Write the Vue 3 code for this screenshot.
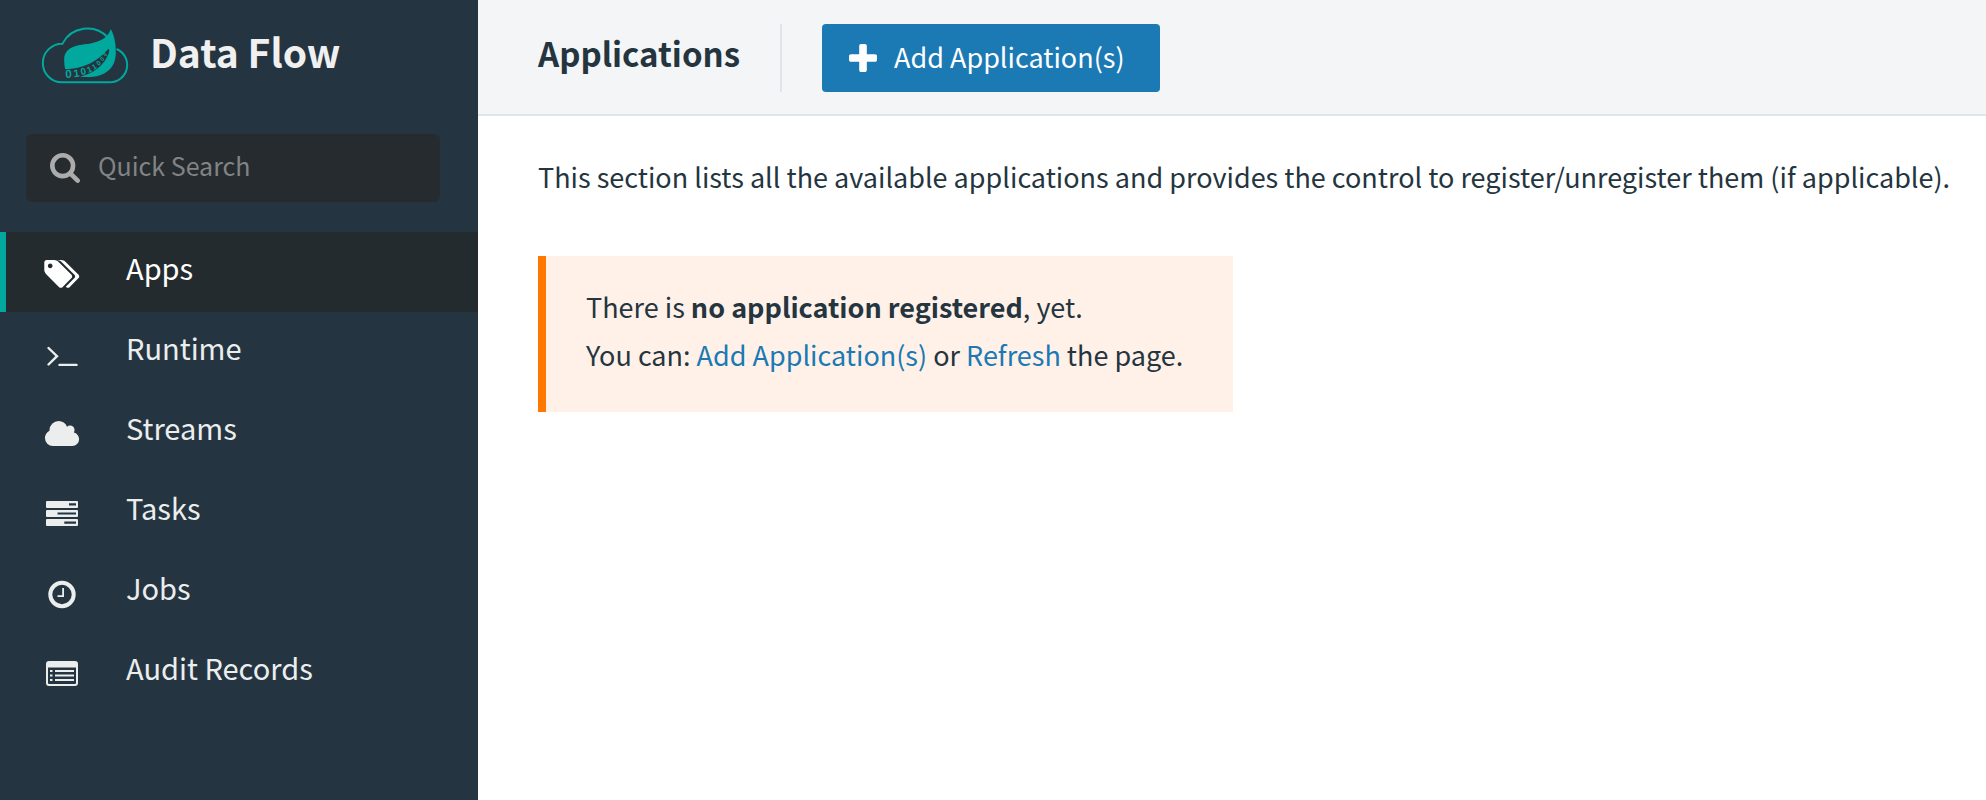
<script setup>
import { ref } from 'vue'

const query = ref('')
const active = ref('Apps')

const items = [
  { label: 'Apps', icon: 'tags' },
  { label: 'Runtime', icon: 'terminal' },
  { label: 'Streams', icon: 'cloud' },
  { label: 'Tasks', icon: 'server' },
  { label: 'Jobs', icon: 'clock' },
  { label: 'Audit Records', icon: 'list' },
]

const digits = [
  { c: '0', x: 97, y: 161, size: 35, turn: -3 },
  { c: '1', x: 121, y: 159, size: 32, turn: -8 },
  { c: '0', x: 141, y: 154, size: 29, turn: -14 },
  { c: '1', x: 159, y: 148, size: 25, turn: -22 },
  { c: '1', x: 174, y: 140, size: 22, turn: -30 },
  { c: '0', x: 187, y: 129, size: 20, turn: -38 },
  { c: '0', x: 198, y: 117, size: 17, turn: -46 },
  { c: '0', x: 207, y: 104, size: 15, turn: -54 },
]
</script>

<template>
  <div class="shell">
    <aside class="sidebar">
      <a class="brand" href="#">
        <svg class="logo" viewBox="15 15 266 180" aria-hidden="true">
          <path
            class="logo-cloud"
            d="M215 52A84 84 0 0 0 79 71A58 58 0 0 0 77 187H222A52 52 0 0 0 241 87"
          />
          <path
            class="logo-leaf"
            d="M224 27C214 55 192 65 160 71C118 75 84 82 84 120Q84 135 87 148C140 146 185 125 217 86Q221 90 217 101C205 135 170 161 132 170C200 177 240 150 239 95Q239 55 224 27Z"
          />
          <text
            v-for="(d, i) in digits"
            :key="i"
            class="logo-digit"
            :font-size="d.size"
            :transform="`translate(${d.x} ${d.y}) rotate(${d.turn})`"
            text-anchor="middle"
            dy="0.36em"
          >{{ d.c }}</text>
        </svg>
        <span class="brand-name">Data Flow</span>
      </a>

      <label class="search">
        <svg class="search-icon" viewBox="64 128 1664 1664" aria-hidden="true">
          <path d="M1216 832q0-185-131.500-316.500t-316.500-131.500-316.500 131.500-131.500 316.500 131.500 316.500 316.500 131.500 316.500-131.500 131.500-316.500zm512 832q0 52-38 90t-90 38q-54 0-90-38l-343-342q-179 124-399 124-143 0-273.500-55.500t-225-150-150-225-55.500-273.500 55.500-273.500 150-225 225-150 273.500-55.500 273.500 55.500 225 150 150 225 55.500 273.500q0 220-124 399l343 343q37 37 37 90z" />
        </svg>
        <input v-model="query" type="text" placeholder="Quick Search" aria-label="Quick Search" />
      </label>

      <nav>
        <a
          v-for="item in items"
          :key="item.label"
          href="#"
          class="nav-item"
          :class="{ active: active === item.label }"
          @click.prevent="active = item.label"
        >
          <svg class="nav-icon" viewBox="0 0 36 36" aria-hidden="true">
            <path
              v-if="item.icon === 'tags'"
              transform="translate(0.3 1.6) scale(0.0184)"
              d="M448 448q0-53-37.500-90.500t-90.500-37.500-90.500 37.500-37.500 90.500 37.500 90.500 90.500 37.500 90.500-37.500 37.500-90.500zm1067 576q0 53-37 90l-491 492q-39 37-91 37-53 0-90-37l-715-716q-38-37-64.500-101t-26.500-117v-416q0-52 38-90t90-38h416q53 0 117 26.500t102 64.500l715 714q37 39 37 91zm384 0q0 53-37 90l-491 492q-39 37-91 37-36 0-59-14t-53-45l470-470q37-37 37-90 0-52-37-91l-715-714q-38-38-102-64.500t-117-26.500h224q53 0 117 26.500t102 64.500l715 714q37 39 37 91z"
            />
            <g v-else-if="item.icon === 'terminal'" class="line">
              <path d="M4.500 12L13 20.200L4.500 28.500" />
              <path d="M15.500 28.900H32.500" />
            </g>
            <path
              v-else-if="item.icon === 'cloud'"
              transform="translate(-0.200 2.700) scale(0.0178)"
              d="M1984 1152q0 159-112.500 271.500t-271.500 112.500h-1088q-185 0-316.500-131.500t-131.500-316.500q0-132 71-241.500t187-163.500q-2-28-2-43 0-212 150-362t362-150q158 0 286.500 88t187.500 230q70-62 166-62 106 0 181 75t75 181q0 75-41 138 129 30 213 134.500t84 239.500z"
            />
            <path
              v-else-if="item.icon === 'server'"
              fill-rule="evenodd"
              d="M3 5H33Q34 5 34 6V11Q34 12 33 12H3Q2 12 2 11V6Q2 5 3 5ZM25 7.300V9.500H32V7.300ZM3 14H33Q34 14 34 15V20Q34 21 33 21H3Q2 21 2 20V15Q2 14 3 14ZM13.500 16.400V18.600H32V16.400ZM3 23H33Q34 23 34 24V29Q34 30 33 30H3Q2 30 2 29V24Q2 23 3 23ZM20.300 25.500V27.700H32V25.500Z"
            />
            <g v-else-if="item.icon === 'clock'">
              <circle class="ring" cx="18" cy="18.500" r="11.700" />
              <path d="M18.200 12H20V21H13.500V19.200H18.200Z" />
            </g>
            <path
              v-else
              fill-rule="evenodd"
              d="M5 5H31Q34 5 34 8V27Q34 30 31 30H5Q2 30 2 27V8Q2 5 5 5ZM4 11.500V27Q4 28 5 28H31Q32 28 32 27V11.500ZM6 14H8.500V16.100H6ZM11 14H30V16.100H11ZM6 18.500H8.500V20.600H6ZM11 18.500H30V20.600H11ZM6 23H8.500V25.100H6ZM11 23H30V25.100H11Z"
            />
          </svg>
          <span class="nav-label">{{ item.label }}</span>
        </a>
      </nav>
    </aside>

    <main class="main">
      <header class="header">
        <h1>Applications</h1>
        <button type="button" class="add">
          <svg viewBox="192 128 1408 1408" aria-hidden="true">
            <path d="M1600 736v192q0 40-28 68t-68 28h-416v416q0 40-28 68t-68 28h-192q-40 0-68-28t-28-68v-416h-416q-40 0-68-28t-28-68v-192q0-40 28-68t68-28h416v-416q0-40 28-68t68-28h192q40 0 68 28t28 68v416h416q40 0 68 28t28 68z" />
          </svg>
          <span class="add-label">Add Application(s)</span>
        </button>
      </header>

      <section class="content">
        <p class="intro">This section lists all the available applications and provides the control to register/unregister them (if applicable).</p>
        <div class="callout">
          <p>There is <strong>no application registered</strong>, yet.</p>
          <p>You can: <a href="#">Add Application(s)</a> or <a href="#">Refresh</a> the page.</p>
        </div>
      </section>
    </main>
  </div>
</template>

<style>
body {
  margin: 0;
  background: #ffffff;
}
</style>

<style scoped>
.shell {
  display: flex;
  min-height: 100vh;
  font-family: "Source Sans Pro", "Noto Sans CJK SC", "Noto Sans", sans-serif;
  font-size: 27px;
  line-height: 48px;
  color: #243540;
}

.sidebar {
  flex: 0 0 478px;
  background: #243541;
}

.brand {
  display: flex;
  align-items: center;
  gap: 20px;
  height: 110px;
  padding-left: 41px;
  box-sizing: border-box;
  color: #f0f0f0;
  font-size: 39px;
  font-weight: 700;
  text-decoration: none;
}

.brand-name {
  padding-bottom: 8px;
}

.logo {
  width: 89px;
  height: 60px;
}

.logo-cloud {
  fill: none;
  stroke: #00a89d;
  stroke-width: 6;
}

.logo-leaf {
  fill: #00a89d;
}

.logo-digit {
  fill: #00a89d;
  font-family: "Liberation Sans", Arial, sans-serif;
  font-weight: 700;
}

.search {
  display: flex;
  align-items: center;
  gap: 18px;
  height: 68px;
  margin: 24px 38px 30px 26px;
  padding: 0 24px;
  box-sizing: border-box;
  border-radius: 6px;
  background: #262b2f;
  font-size: 25px;
}

.search-icon {
  flex: none;
  width: 30px;
  height: 30px;
  fill: #acacac;
}

.search input {
  flex: 1;
  min-width: 0;
  height: 48px;
  padding: 0 0 6px;
  border: 0;
  outline: 0;
  background: transparent;
  color: #f0f0f0;
  font: inherit;
}

.search input::placeholder {
  color: #818486;
  opacity: 1;
}

.nav-item {
  display: flex;
  align-items: center;
  gap: 46px;
  height: 80px;
  padding-left: 38px;
  box-sizing: border-box;
  border-left: 6px solid transparent;
  color: #eceeee;
  font-size: 29px;
  text-decoration: none;
}

.nav-item.active {
  border-left-color: #00a89d;
  background: #242b2e;
  color: #ffffff;
}

.nav-icon {
  width: 36px;
  height: 36px;
  padding-top: 4px;
  fill: currentColor;
}

.nav-label {
  padding-bottom: 10px;
}

.line {
  fill: none;
  stroke: currentColor;
  stroke-width: 2.4;
  stroke-linecap: round;
}

.ring {
  fill: none;
  stroke: currentColor;
  stroke-width: 4;
}

.main {
  flex: 1;
  min-width: 0;
}

.header {
  display: flex;
  align-items: center;
  gap: 40px;
  padding: 24px 60px 22px;
  border-bottom: 2px solid #e1e5e9;
  background: #f4f5f7;
}

h1 {
  margin: 0;
  padding: 0 40px 10px 0;
  border-right: 2px solid #e1e4e8;
  font-size: 33px;
  font-weight: 700;
  line-height: 58px;
}

.add {
  display: flex;
  align-items: center;
  gap: 17px;
  height: 68px;
  padding: 0 35px 0 27px;
  border: 0;
  border-radius: 4px;
  background: #1b79b4;
  color: #ffffff;
  font: inherit;
}

.add svg {
  width: 28px;
  height: 28px;
  fill: currentColor;
}

.add-label {
  padding-bottom: 2px;
}

.content {
  padding: 37px 30px 0 60px;
}

p {
  margin: 0;
}

.intro {
  margin-bottom: 55px;
}

.callout {
  width: fit-content;
  padding: 27px 50px 33px 40px;
  border-left: 8px solid #ff7900;
  background: #fff1e8;
}

a {
  color: #1b79b4;
  text-decoration: none;
}
</style>
